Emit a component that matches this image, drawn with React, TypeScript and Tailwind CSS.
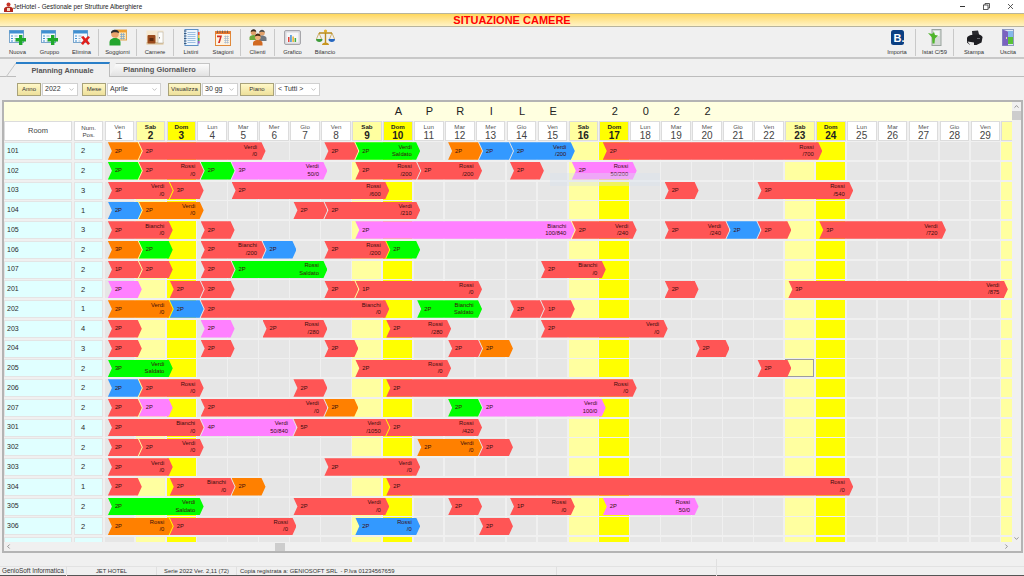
import { ChevronDown, ChevronLeft, ChevronRight, ChevronUp } from "lucide-react"
import type { ReactNode } from "react"

const PITCH = 30.93
const WEEK = ["Ven", "Sab", "Dom", "Lun", "Mar", "Mer", "Gio"]
const DAYS = Array.from({ length: 30 }, (_, i) => ({ n: i + 1, name: WEEK[i % 7], kind: i % 7 }))
const TITLE: Record<number, string> = { 10: "A", 11: "P", 12: "R", 13: "I", 14: "L", 15: "E", 17: "2", 18: "0", 19: "2", 20: "2" }

const BAR_COLOR = {
  r: "bg-[#ff5555]",
  g: "bg-[#00ff00]",
  o: "bg-[#ff8000]",
  b: "bg-[#3399ff]",
  m: "bg-[#ff80ff]",
}

type Bar = [number, number, keyof typeof BAR_COLOR, string, string?, string?]
type Row = { room: string; pos: string; bars: Bar[] }

const ROWS: Row[] = [
  { room: "101", pos: "2", bars: [[1, 1, "o", "2P"], [2, 4, "r", "2P", "Verdi", "/0"], [8, 1, "r", "2P"], [9, 2, "g", "2P", "Verdi", "Saldato"], [12, 1, "o", "2P"], [13, 1, "b", "2P"], [14, 2, "b", "2P", "Verdi", "/200"], [17, 7, "r", "2P", "Rossi", "/700"]] },
  { room: "102", pos: "2", bars: [[1, 1, "g", "2P"], [2, 2, "r", "2P", "Rossi", "/0"], [4, 1, "g", "2P"], [5, 3, "m", "3P", "Verdi", "50/0"], [9, 2, "r", "2P", "Rossi", "/200"], [11, 2, "r", "2P", "Rossi", "/200"], [14, 1, "r", "2P"], [16, 2, "m", "2P", "Rossi", "50/200"]] },
  { room: "103", pos: "3", bars: [[1, 2, "r", "3P", "Verdi", "/0"], [3, 1, "r", "3P"], [5, 5, "r", "2P", "Rossi", "/600"], [19, 1, "r", "2P"], [22, 3, "r", "3P", "Rossi", "/540"]] },
  { room: "104", pos: "1", bars: [[1, 1, "b", "2P"], [2, 2, "o", "2P", "Verdi", "/0"], [7, 1, "r", "2P"], [8, 3, "r", "2P", "Verdi", "/210"]] },
  { room: "105", pos: "3", bars: [[1, 2, "r", "2P", "Bianchi", "/0"], [4, 1, "r", "2P"], [9, 7, "m", "2P", "Bianchi", "100/840"], [16, 2, "r", "2P", "Verdi", "/240"], [19, 2, "r", "2P", "Verdi", "/240"], [21, 1, "b", "2P"], [22, 1, "r", "2P"], [24, 4, "r", "3P", "Verdi", "/720"]] },
  { room: "106", pos: "2", bars: [[1, 1, "o", "3P"], [2, 1, "g", "2P"], [4, 2, "r", "2P", "Bianchi", "/200"], [6, 1, "b", "2P"], [8, 2, "r", "2P", "Rossi", "/200"], [10, 1, "g", "2P"]] },
  { room: "107", pos: "2", bars: [[1, 1, "r", "1P"], [2, 1, "r", "2P"], [4, 1, "r", "2P"], [5, 3, "g", "2P", "Rossi", "Saldato"], [15, 2, "r", "2P", "Bianchi", "/0"]] },
  { room: "201", pos: "2", bars: [[1, 1, "m", "2P"], [3, 1, "r", "2P"], [4, 1, "r", "2P"], [8, 1, "r", "2P"], [9, 4, "r", "1P", "Rossi", "/0"], [19, 1, "r", "2P"], [23, 7, "r", "3P", "Verdi", "/875"]] },
  { room: "202", pos: "1", bars: [[1, 2, "o", "2P", "Verdi", "/0"], [3, 1, "b", "2P"], [4, 6, "r", "2P", "Bianchi", "/0"], [11, 2, "g", "2P", "Bianchi", "Saldato"], [14, 1, "r", "2P"], [15, 1, "r", "1P"]] },
  { room: "203", pos: "4", bars: [[1, 1, "r", "2P"], [4, 1, "m", "2P"], [6, 2, "r", "2P", "Rossi", "/280"], [10, 2, "r", "2P", "Rossi", "/280"], [15, 4, "r", "2P", "Verdi", "/0"]] },
  { room: "204", pos: "3", bars: [[1, 1, "r", "2P"], [4, 1, "r", "2P"], [8, 1, "r", "2P"], [12, 1, "r", "2P"], [13, 1, "o", "2P"], [20, 1, "r", "2P"]] },
  { room: "205", pos: "2", bars: [[1, 2, "g", "3P", "Verdi", "Saldato"], [9, 3, "r", "2P", "Rossi", "/0"], [22, 1, "r", "2P"]] },
  { room: "206", pos: "2", bars: [[1, 1, "b", "2P"], [2, 2, "r", "2P", "Rossi", "/0"], [7, 1, "r", "2P"], [10, 8, "r", "2P", "Rossi", "/0"]] },
  { room: "207", pos: "2", bars: [[1, 1, "r", "2P"], [2, 1, "m", "2P"], [4, 4, "r", "2P", "Verdi", "/0"], [8, 1, "o", "2P"], [12, 1, "g", "2P"], [13, 4, "m", "2P", "Verdi", "100/0"]] },
  { room: "301", pos: "4", bars: [[1, 3, "r", "2P", "Bianchi", "/0"], [4, 3, "m", "4P", "Verdi", "50/840"], [7, 3, "r", "5P", "Verdi", "/1050"], [10, 3, "r", "2P", "Rossi", "/420"]] },
  { room: "302", pos: "2", bars: [[1, 1, "r", "2P"], [2, 2, "r", "2P", "Verdi", "/0"], [11, 2, "o", "2P", "Verdi", "/0"], [13, 1, "r", "2P"]] },
  { room: "303", pos: "2", bars: [[1, 2, "r", "2P", "Verdi", "/0"], [8, 3, "r", "2P", "Verdi", "/0"]] },
  { room: "304", pos: "1", bars: [[1, 1, "r", "2P"], [3, 2, "r", "2P", "Bianchi", "/0"], [5, 1, "o", "2P"], [10, 15, "r", "2P", "Rossi", "/0"]] },
  { room: "305", pos: "2", bars: [[1, 3, "g", "2P", "Verdi", "Saldato"], [7, 3, "r", "2P", "Verdi", "/0"], [12, 1, "r", "2P"], [14, 2, "r", "1P", "Rossi", "/0"], [17, 3, "m", "2P", "Rossi", "50/0"]] },
  { room: "306", pos: "2", bars: [[1, 2, "o", "2P", "Rossi", "/0"], [3, 4, "r", "2P", "Rossi", "/0"], [9, 2, "b", "2P", "Rossi", "/0"], [13, 1, "r", "2P"]] },
  { room: "307", pos: "2", bars: [] },
]

function TableIcon({ mark }: { mark: "plus" | "x" }) {
  return (
    <svg width="18" height="15" viewBox="0 0 18 15">
      <rect x="0.5" y="0.5" width="14" height="12" fill="#f4f9fd" stroke="#7aa6cc" />
      <rect x="0.5" y="0.5" width="14" height="3" fill="#3f8fd2" />
      <path d="M2 6h2M2 8.5h2M2 11h2" stroke="#3f8fd2" />
      <path d="M5.5 6h3M5.5 8.5h2M5.5 11h2" stroke="#9db9d2" />
      {mark === "plus" ? (
        <path d="M10 5h3.4v3H17v3.4h-3.6V15H10v-3.6H6.6V8H10z" fill="#1fa82c" />
      ) : (
        <path d="M8 7l2.4-1 2.1 2.4L15 6l2 1.2-2.6 3L17 13.5 15 15l-2.500-3L10 15l-2-1.500L10.500 10.200z" fill="#e0201c" />
      )}
    </svg>
  )
}

function SoggiorniIcon() {
  return (
    <svg width="18" height="17" viewBox="0 0 18 17">
      <rect x="7" y="1" width="10.5" height="10" fill="#fbe3b4" stroke="#e0a64f" />
      <rect x="7" y="1" width="10.5" height="2.4" fill="#f0a030" />
      <path d="M11 5.5h5M11 7.5h5M11 9.5h5M12.5 4v6.5M14.5 4v6.5" stroke="#7ea6c8" strokeWidth="0.7" />
      <circle cx="6" cy="5" r="3.8" fill="#e9a36c" />
      <path d="M2 4.5C2 1.500 4 .8 6 .8s4 .8 4 3.500C8 3 4 3 2 4.500z" fill="#2c2c2c" />
      <path d="M0.5 16.500v-3c0-3 2.500-4.500 5.500-4.500s5.500 1.500 5.500 4.500v3z" fill="#24a52e" />
    </svg>
  )
}

function CamereIcon() {
  return (
    <svg width="18" height="15" viewBox="0 0 18 15">
      <rect x="0.5" y="0.5" width="17" height="14" fill="#f6e8cf" />
      <rect x="0.5" y="12" width="17" height="2.5" fill="#d9c19a" />
      <rect x="12" y="2" width="5" height="11" fill="#fdfdfb" stroke="#b9b2a4" strokeWidth="0.6" />
      <rect x="13" y="7" width="0.9" height="1.5" fill="#777" />
      <rect x="1.5" y="5" width="8" height="8.5" rx="1" fill="#9a4a1c" />
      <rect x="3.5" y="8" width="4" height="3" fill="#5f2a0e" />
    </svg>
  )
}

function ListiniIcon() {
  return (
    <svg width="17" height="17" viewBox="0 0 17 17">
      <rect x="2" y="0.5" width="13" height="16" fill="#eef5fc" stroke="#5d8fc4" />
      <path d="M4.5 3.5h8M4.5 5.5h8M4.5 7.5h8M4.5 9.5h8M4.5 11.5h8M4.5 13.5h8" stroke="#7aa8d6" strokeWidth="0.7" />
      <path d="M1 2h2.5M1 4.5h2.5M1 7h2.5M1 9.5h2.5M1 12h2.5M1 14.5h2.5" stroke="#38597f" />
      <rect x="15" y="3" width="1.6" height="3" fill="#e8503c" />
      <rect x="15" y="6" width="1.6" height="3" fill="#e8c03c" />
      <rect x="15" y="9" width="1.6" height="3" fill="#46b04a" />
      <rect x="15" y="12" width="1.6" height="2.5" fill="#9a55c8" />
    </svg>
  )
}

function StagioniIcon() {
  return (
    <svg width="16" height="16" viewBox="0 0 16 16">
      <rect x="0.5" y="1.5" width="15" height="14" fill="#fdf3e2" stroke="#e0893a" />
      <rect x="0.5" y="1.5" width="15" height="2.5" fill="#e8762c" />
      <path d="M2.5 0.5v2.5M5 0.5v2.5M7.5 0.5v2.5M10 0.5v2.5M12.5 0.5v2.5" stroke="#555" strokeWidth="0.7" />
      <path d="M2 5.5h5L4.800 13H3l2-5.800H2z" fill="#d62a20" />
      <path d="M9 6.5h5M9 8.5h5M9 10.5h5M9 12.5h5M10.5 5.5v8M12.5 5.5v8" stroke="#9db4cc" strokeWidth="0.6" />
    </svg>
  )
}

function ClientiIcon() {
  return (
    <svg width="18" height="17" viewBox="0 0 18 17">
      <circle cx="4.5" cy="3.5" r="2.8" fill="#e2a26c" />
      <path d="M1.7 3c.3-2 1.500-2.800 2.800-2.800S7 1 7.300 3C5.500 2 3.500 2 1.700 3z" fill="#3a2a1c" />
      <path d="M0.5 11V8.500C.5 7 2.500 6 4.500 6s3 1 3 2.500V11z" fill="#6faa3c" />
      <circle cx="13" cy="4" r="2.8" fill="#e2a26c" />
      <path d="M10.2 3.500c.3-2 1.500-2.800 2.800-2.800s2.500.8 2.800 2.800c-1.800-1-3.800-1-5.600 0z" fill="#50504e" />
      <path d="M9.5 12V9c0-1.500 1.500-2.500 3.500-2.500s4.500 1 4.500 2.500v3z" fill="#6e7780" />
      <circle cx="8.8" cy="8" r="3" fill="#eeb07a" />
      <path d="M5.8 7.500c.3-2 1.500-3 3-3s2.700 1 3 3c-2-1-4-1-6 0z" fill="#4a2a12" />
      <path d="M4 16.500V14c0-2 2.300-3 4.800-3s4.700 1 4.700 3v2.500z" fill="#d26a22" />
    </svg>
  )
}

function GraficoIcon() {
  return (
    <svg width="17" height="15" viewBox="0 0 17 15">
      <rect x="0.5" y="0.5" width="16" height="14" rx="1.5" fill="#d8d8dc" stroke="#a6a6aa" />
      <rect x="2.5" y="2.5" width="12" height="10" fill="#f6f6f8" />
      <rect x="4" y="7" width="1.5" height="5" fill="#e0433a" />
      <rect x="6.2" y="5" width="1.5" height="7" fill="#3f8fd2" />
      <rect x="8.4" y="6.5" width="1.5" height="5.5" fill="#f0b428" />
      <rect x="10.6" y="8" width="1.5" height="4" fill="#3fae4a" />
    </svg>
  )
}

function BilancioIcon() {
  return (
    <svg width="19" height="17" viewBox="0 0 19 17">
      <path d="M9.5 1v13M3 4h13" stroke="#b88a1c" strokeWidth="1.4" />
      <circle cx="9.5" cy="2" r="1.6" fill="#e2b22c" />
      <path d="M6 16c0-1.600 1.500-2.500 3.500-2.500s3.500.9 3.500 2.500z" fill="#c8961e" />
      <path d="M3 4L.5 10M3 4l2.500 6M16 4l-2.500 6M16 4l2.500 6" stroke="#b88a1c" strokeWidth="0.6" />
      <path d="M0 10h6.500c0 2.200-1.400 3-3.200 3S0 12.200 0 10z" fill="#3f9c3a" />
      <path d="M12.5 10H19c0 2.200-1.400 3-3.200 3s-3.300-.8-3.300-3z" fill="#2667c0" />
    </svg>
  )
}

function BookingIcon() {
  return (
    <svg width="13" height="15" viewBox="0 0 13 15">
      <rect width="13" height="15" rx="2.5" fill="#0b3f82" />
      <text x="2.5" y="11.5" fontSize="11" fontWeight="700" fill="#fff" fontFamily="Liberation Sans, sans-serif">B.</text>
    </svg>
  )
}

function IstatIcon() {
  return (
    <svg width="14" height="17" viewBox="0 0 14 17">
      <rect x="4" y="0.5" width="9" height="16" fill="#d4dad6" stroke="#9aa49e" />
      <rect x="6" y="2" width="5.5" height="5" fill="#f2f5f3" />
      <path d="M0 4l4 1 2-2 1 3 3 .5-3 3-.5 5H4.500L4 8.500z" fill="#4fb52c" />
    </svg>
  )
}

function StampaIcon() {
  return (
    <svg width="17" height="16" viewBox="0 0 17 16">
      <path d="M6 1l6-.5 1.500 5.500-7 1z" fill="#2a2a2e" />
      <path d="M1 8c0-1.500 2-2.500 4-3l8-.5c2 .5 3.500 1.500 3.500 3l-1 5-5 2.500H4L1 12.500z" fill="#1e1e22" />
      <path d="M1.5 11.500L8 12.500V15H4z" fill="#e8e8e8" />
      <rect x="11" y="8" width="3" height="1" fill="#6a6a70" />
    </svg>
  )
}

function UscitaIcon() {
  return (
    <svg width="12" height="17" viewBox="0 0 12 17">
      <rect x="0.5" y="0.5" width="11" height="16" fill="#dfe8f4" stroke="#8f9cc0" />
      <rect x="6" y="2" width="5" height="6" fill="#84b8ea" />
      <rect x="6" y="8" width="5" height="7" fill="#58c238" />
      <path d="M0.5 0.5L6 2.500v14H0.500z" fill="#7a62c0" />
      <rect x="4" y="8" width="1" height="2" fill="#e8e0a0" />
    </svg>
  )
}

function Tool({ icon, label, width }: { icon: ReactNode; label: string; width: string }) {
  return (
    <div className={`flex h-full flex-col items-center ${width}`}>
      <div className="flex h-[20px] items-center justify-center pt-[1px]">{icon}</div>
      <span className="mt-[1px] whitespace-nowrap text-[5.8px] leading-[8px] text-[#333]">{label}</span>
    </div>
  )
}

function Sep() {
  return <div className="mx-[1px] my-[2px] h-[27px] w-px bg-[#c9c9c9]" />
}

function Filter({ label, value, btn, box, gap }: { label: string; value: string; btn: string; box: string; gap: string }) {
  return (
    <div className={`flex h-[13px] ${gap}`}>
      <div className={`flex items-center justify-center border border-[#a8a27a] bg-gradient-to-b from-[#fff8c8] to-[#eee09a] text-[6px] text-[#333] ${btn}`}>
        {label}
      </div>
      <div className={`ml-px flex items-center justify-between border border-[#d0d0d0] bg-white px-[2px] text-[7px] text-[#333] ${box}`}>
        <span className="whitespace-nowrap">{value}</span>
        <ChevronDown size={7} strokeWidth={1.5} className="text-[#777]" />
      </div>
    </div>
  )
}

function BarItem({ bar }: { bar: Bar }) {
  const [day, nights, color, pax, name, sub] = bar
  return (
    <div
      className={`absolute top-[0.3px] flex h-[17.5px] items-center justify-between pl-[7px] pr-[8.5px] text-[5.8px] text-[#3a0e0e] [clip-path:polygon(0_0,calc(100%-4px)_0,100%_50%,calc(100%-4px)_100%,0_100%,4px_50%)] ${BAR_COLOR[color]}`}
      style={{ left: (day - 1) * PITCH + 3.2, width: nights * PITCH + 3 }}
    >
      <span>{pax}</span>
      {name && (
        <span className="whitespace-nowrap text-right leading-[7.4px]">
          {name}
          <br />
          {sub}
        </span>
      )}
    </div>
  )
}

export default function App() {
  return (
    <div className="flex h-[576px] w-[1024px] flex-col overflow-hidden bg-[#f0f0f0] font-['Liberation_Sans',sans-serif] text-[#222]">
      {/* window title */}
      <div className="flex h-[13px] items-center bg-white pl-[4px]">
        <svg width="9" height="10" viewBox="0 0 9 10">
          <circle cx="4.5" cy="2.5" r="2" fill="#c8362a" />
          <path d="M0 10V7c0-1.500 2-2.500 4.500-2.500S9 5.500 9 7v3z" fill="#b3281e" />
          <rect x="3" y="6" width="3" height="3" fill="#f2d9c0" />
        </svg>
        <span className="text-[6.3px] text-[#222]">JetHotel - Gestionale per Strutture Alberghiere</span>
        <div className="ml-auto flex items-center gap-[17px] pr-[10px]">
          <svg width="7" height="7" viewBox="0 0 7 7"><path d="M1 3.500h5" stroke="#333" /></svg>
          <svg width="7" height="7" viewBox="0 0 7 7" fill="none" stroke="#333" strokeWidth="0.8"><rect x="0.5" y="2" width="4.5" height="4.5" /><path d="M2 2V.5h4.500V5H5" /></svg>
          <svg width="7" height="7" viewBox="0 0 7 7" stroke="#333" strokeWidth="0.8"><path d="M1 1l5 5M6 1L1 6" /></svg>
        </div>
      </div>

      {/* banner */}
      <div className="flex h-[14px] items-center justify-center border-y border-[#b8b49c] bg-gradient-to-b from-[#ffd75a] to-[#fff3c4] text-[11px] font-bold text-[#ff0000]">
        SITUAZIONE CAMERE
      </div>

      {/* toolbar */}
      <div className="flex h-[32px] items-start border-b-2 border-[#c8c8c8] pl-[2px] pr-[1px]">
        <Tool width="w-[31px]" label="Nuova" icon={<TableIcon mark="plus" />} />
        <Tool width="w-[33px]" label="Gruppo" icon={<TableIcon mark="plus" />} />
        <Tool width="w-[31px]" label="Elimina" icon={<TableIcon mark="x" />} />
        <Sep />
        <Tool width="w-[35px]" label="Soggiorni" icon={<SoggiorniIcon />} />
        <Sep />
        <Tool width="w-[34px]" label="Camere" icon={<CamereIcon />} />
        <Sep />
        <Tool width="w-[32px]" label="Listini" icon={<ListiniIcon />} />
        <Tool width="w-[32px]" label="Stagioni" icon={<StagioniIcon />} />
        <Sep />
        <Tool width="w-[31px]" label="Clienti" icon={<ClientiIcon />} />
        <Sep />
        <Tool width="w-[33px]" label="Grafico" icon={<GraficoIcon />} />
        <Tool width="w-[32px]" label="Bilancio" icon={<BilancioIcon />} />
        <div className="ml-auto flex items-start">
          <Tool width="w-[34px]" label="Importa" icon={<BookingIcon />} />
          <Sep />
          <Tool width="w-[35px]" label="Istat C/59" icon={<IstatIcon />} />
          <Sep />
          <Tool width="w-[38px]" label="Stampa" icon={<StampaIcon />} />
          <Tool width="w-[30px]" label="Uscita" icon={<UscitaIcon />} />
        </div>
      </div>

      {/* tabs */}
      <div className="mt-[3px] flex h-[15px] items-end border-b border-[#bcbcbc]">
        <svg width="16" height="15" viewBox="0 0 16 15" className="-mb-px shrink-0">
          <path d="M6 15L16 1" stroke="#c4c4c4" fill="none" />
        </svg>
        <div className="-mb-px flex h-[15px] w-[94px] items-center justify-center border-t-2 border-r border-t-[#2a7fc8] border-r-[#bcbcbc] bg-[#f0f0f0] text-[7.4px] font-bold text-[#555]">
          Planning Annuale
        </div>
        <div className="flex h-[13px] w-[100px] items-center justify-center border-t border-r border-[#c4c4c4] bg-gradient-to-b from-[#fbfbfb] to-[#e2e2e2] text-[7.4px] font-bold text-[#555] [clip-path:polygon(6px_0,100%_0,100%_100%,0_100%)]">
          Planning Giornaliero
        </div>
      </div>

      {/* filters */}
      <div className="ml-[17px] mt-[6px] flex items-start">
        <Filter gap="mr-[4px]" btn="w-[24px]" box="w-[36px]" label="Anno" value="2022" />
        <Filter gap="mr-[7px]" btn="w-[24px]" box="w-[54px]" label="Mese" value="Aprile" />
        <Filter gap="mr-[2px]" btn="w-[33px]" box="w-[36px]" label="Visualizza" value="30 gg" />
        <Filter gap="" btn="w-[34px]" box="w-[45px]" label="Piano" value="< Tutti >" />
      </div>

      {/* planning panel */}
      <div className="ml-[2px] mt-[4px] flex h-[453px] w-[1021px] flex-col border-2 border-[#b4b4b4]">
        <div className="flex min-h-0 flex-1">
          <div className="flex w-[1008px] min-w-0 flex-col overflow-hidden">
            <div className="flex h-[19px] shrink-0 bg-[#ffffe0]">
              <div className="w-[100.7px] shrink-0" />
              <div className="grid grid-cols-[repeat(30,30.93px)]">
                {DAYS.map((d) => (
                  <div key={d.n} className="flex items-center justify-center text-[11px] text-[#222]">
                    {TITLE[d.n]}
                  </div>
                ))}
              </div>
            </div>

            <div className="flex h-[20px] shrink-0">
              <div className="flex w-[70px] shrink-0 pr-[2px]">
                <div className="flex flex-1 items-center justify-center border border-[#dcdcdc] bg-white text-[7.5px] text-[#444]">Room</div>
              </div>
              <div className="flex w-[30.7px] shrink-0 pr-[1.5px]">
                <div className="flex flex-1 items-center justify-center border border-[#dcdcdc] bg-white text-center text-[6.2px] leading-[7.5px] text-[#444]">
                  Num.
                  <br />
                  Pos.
                </div>
              </div>
              <div className="grid grid-cols-[repeat(30,30.93px)]">
                {DAYS.map((d) => (
                  <div
                    key={d.n}
                    className={`mr-[1.2px] flex flex-col items-center border border-[#dcdcdc] pt-[0.5px] ${d.kind === 1 ? "bg-[#ffffa0]" : d.kind === 2 ? "bg-[#ffff00]" : "bg-white"}`}
                  >
                    {d.n < 30 && (
                      <>
                        <span className={`text-[6.2px] leading-[8px] ${d.kind === 1 || d.kind === 2 ? "font-semibold text-[#222]" : "text-[#555]"}`}>{d.name}</span>
                        <span className={`text-[10px] leading-[9px] ${d.kind === 1 || d.kind === 2 ? "font-bold text-[#222]" : "text-[#444]"}`}>{d.n}</span>
                      </>
                    )}
                  </div>
                ))}
              </div>
            </div>

            <div className="relative mt-px min-h-0 flex-1 overflow-hidden">
              {ROWS.map((row) => (
                <div key={row.room} className="flex h-[19.75px]">
                  <div className="flex w-[70px] shrink-0 pb-[1.75px] pr-[2px]">
                    <div className="flex flex-1 items-center border border-[#e4e4e4] bg-[#e0ffff] pl-[2px] text-[7px] text-[#2a2a2a]">{row.room}</div>
                  </div>
                  <div className="flex w-[30.7px] shrink-0 pb-[1.75px] pr-[1.5px]">
                    <div className="flex flex-1 items-center border border-[#e4e4e4] bg-[#e0ffff] pl-[6px] text-[7.5px] text-[#2a2a2a]">{row.pos}</div>
                  </div>
                  <div className="relative">
                    <div className="grid h-full grid-cols-[repeat(30,30.93px)]">
                      {DAYS.map((d) => (
                        <div
                          key={d.n}
                          className={`mb-[1.75px] mr-[1.5px] ${d.kind === 1 ? "bg-[#ffffa0]" : d.kind === 2 ? "bg-[#ffff00]" : "bg-[#e6e6e6]"} ${row.room === "205" && d.n === 23 ? "border border-[#9c9c9c]" : ""}`}
                        />
                      ))}
                    </div>
                    {row.bars.map((bar) => (
                      <BarItem key={bar[0]} bar={bar} />
                    ))}
                  </div>
                </div>
              ))}
              {/* ghost of a fading tooltip */}
              <div className="absolute left-[546px] top-[31px] h-[13px] w-[110px] bg-[#d8e2ee]/40" />
            </div>
          </div>

          {/* vertical scrollbar */}
          <div className="flex w-[9px] flex-col items-center bg-[#f0f0f0]">
            <ChevronUp size={7} strokeWidth={2} className="mt-[1px] text-[#555]" />
            <div className="mt-[1px] h-[9px] w-full bg-[#cdcdcd]" />
            <ChevronDown size={7} strokeWidth={2} className="mt-auto text-[#555]" />
          </div>
        </div>

        {/* horizontal scrollbar */}
        <div className="flex h-[9px] shrink-0 items-center bg-[#f0f0f0] pl-[1px] pr-[11px]">
          <ChevronLeft size={7} strokeWidth={2} className="text-[#555]" />
          <div className="ml-[263px] h-[8px] w-[10px] bg-[#cdcdcd]" />
          <ChevronRight size={7} strokeWidth={2} className="ml-auto text-[#555]" />
        </div>
      </div>

      {/* status bar */}
      <div className="mt-auto flex h-[10px] items-center border-y border-t-[#e2e2e2] border-b-[#555] text-[#333]">
        <div className="w-[67px] whitespace-nowrap border-r border-[#e0e0e0] pl-[2px] text-[6.4px]">GenioSoft Informatica</div>
        <div className="w-[90px] border-r border-[#e0e0e0] text-center text-[5.8px]">JET HOTEL</div>
        <div className="w-[80px] border-r border-[#e0e0e0] text-center text-[5.9px]">Serie 2022 Ver. 2,11 (72)</div>
        <div className="w-[320px] whitespace-pre border-r border-[#e0e0e0] pl-[3px] text-[5.9px]">Copia registrata a: GENIOSOFT SRL  - P.Iva 01234567659</div>
        <div className="w-[160px] border-r border-[#e0e0e0]">&nbsp;</div>
      </div>
    </div>
  )
}
